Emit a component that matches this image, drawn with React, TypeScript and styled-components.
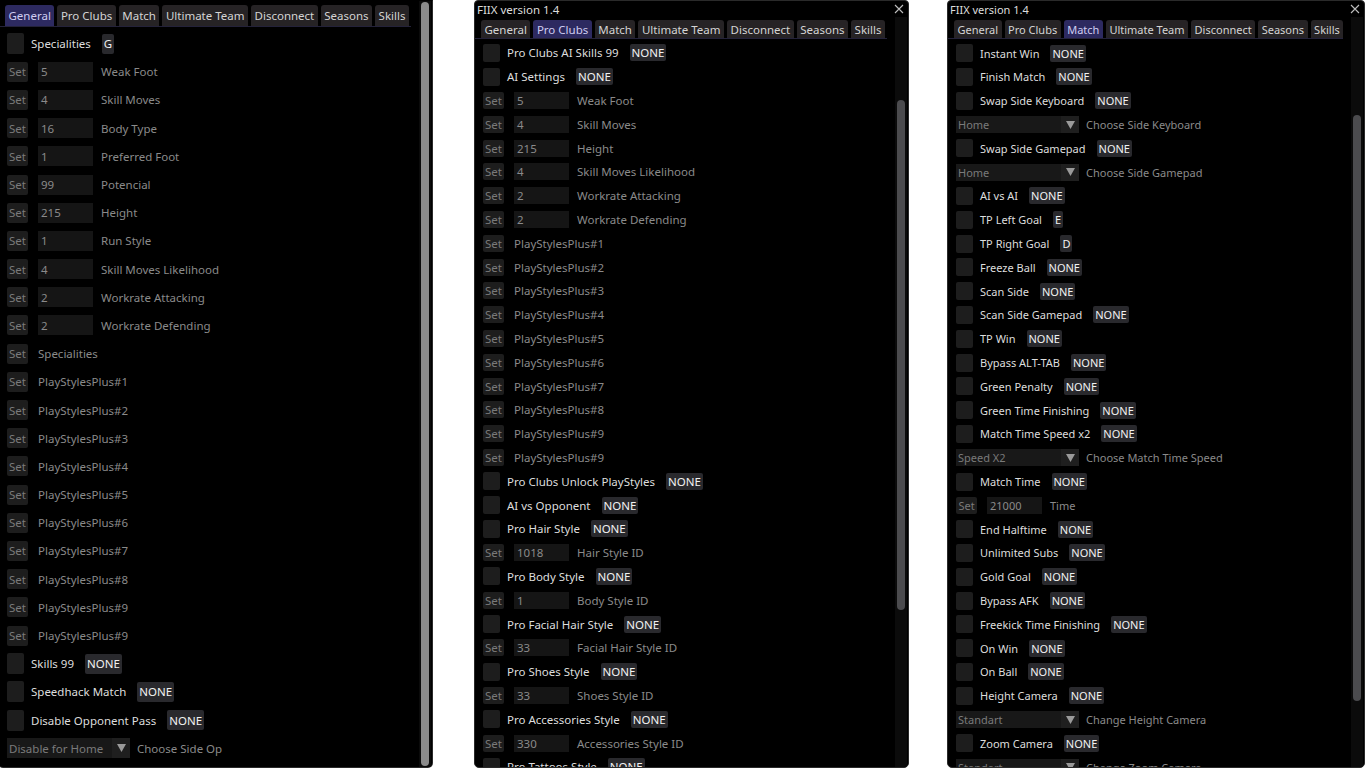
import React from 'react';
import styled, { createGlobalStyle } from 'styled-components';

const colors = {
    page: '#ffffff',
    windowBg: '#000000',
    border: '#2a2a2a',
    tab: '#262325',
    tabActive: '#2d2a60',
    tabText: '#d4d4d4',
    tabActiveText: '#cfcdf2',
    tabLine: '#24223a',
    frame: '#1d1d1d',
    input: '#151515',
    key: '#29292d',
    textBright: '#dddddd',
    textDim: '#8a8a8a',
    textFaint: '#7a7a7a',
    track: '#0b0b0b',
};

const GlobalStyle = createGlobalStyle`
    html, body {
        margin: 0;
        padding: 0;
        background: ${colors.page};
    }
    body {
        font-family: 'Noto Sans', 'Open Sans', sans-serif;
        -webkit-font-smoothing: antialiased;
    }
`;

type Row =
    | { kind: 'check'; label: string; bind: string }
    | { kind: 'set'; value?: string; label: string }
    | { kind: 'combo'; value: string; label: string };

type Metrics = {
    rowH: number;
    elemH: number;
    tabTop: number;
    tabH: number;
    rowsTop: number;
    fontSize: number;
};

const tabs = ['General', 'Pro Clubs', 'Match', 'Ultimate Team', 'Disconnect', 'Seasons', 'Skills'];

const Page = styled.div`
    display: flex;
    align-items: flex-start;
    width: 1366px;
    height: 768px;
    overflow: hidden;
`;

const Window = styled.div<{ $left: number; $width: number; $titled: boolean; $font: number }>`
    flex: none;
    margin-left: ${p => p.$left}px;
    width: ${p => p.$width}px;
    height: 768px;
    box-sizing: border-box;
    background: ${colors.windowBg};
    border: 1px solid ${colors.border};
    border-top-color: ${p => (p.$titled ? colors.border : 'transparent')};
    border-radius: ${p => (p.$titled ? '4px 4px 5px 5px' : '0 0 5px 5px')};
    overflow: hidden;
    display: flex;
    flex-direction: column;
    font-size: ${p => p.$font}px;
    color: ${colors.textBright};
`;

const TitleBar = styled.div`
    flex: none;
    height: 16px;
    display: flex;
    align-items: center;
    justify-content: space-between;
    padding: 0 4px 0 2px;
    color: ${colors.textBright};
    white-space: nowrap;
`;

const Body = styled.div`
    flex: 1;
    min-height: 0;
    display: flex;
`;

const Content = styled.div`
    flex: 1;
    min-width: 0;
    overflow: hidden;
`;

const TabBar = styled.div<{ $top: number; $h: number }>`
    display: flex;
    gap: 3px;
    margin-top: ${p => p.$top}px;
    height: ${p => p.$h}px;
    padding-left: 6px;
    margin-right: 8px;
    border-bottom: 1px solid ${colors.tabLine};
`;

const Tab = styled.div<{ $active: boolean }>`
    display: flex;
    align-items: center;
    padding: 0 3.5px;
    border-radius: 3px 3px 0 0;
    background: ${p => (p.$active ? colors.tabActive : colors.tab)};
    color: ${p => (p.$active ? colors.tabActiveText : colors.tabText)};
    white-space: nowrap;
`;

const Rows = styled.div<{ $top: number }>`
    margin-top: ${p => p.$top}px;
    padding-left: 8px;
`;

const RowLine = styled.div<{ $h: number }>`
    height: ${p => p.$h}px;
    display: flex;
    align-items: center;
    white-space: nowrap;
`;

const CheckBox = styled.div<{ $h: number }>`
    flex: none;
    width: 17px;
    height: ${p => p.$h}px;
    margin-right: 7px;
    border-radius: 2px;
    background: ${colors.frame};
`;

const Label = styled.span<{ $dim?: boolean }>`
    color: ${p => (p.$dim ? colors.textDim : colors.textBright)};
`;

const KeyButton = styled.div<{ $h: number }>`
    display: flex;
    align-items: center;
    height: ${p => p.$h}px;
    margin-left: 11px;
    padding: 0 2px;
    border-radius: 2px;
    background: ${colors.key};
    color: #f2f2f2;
`;

const SetButton = styled.div<{ $h: number }>`
    flex: none;
    display: flex;
    align-items: center;
    justify-content: center;
    width: 21px;
    height: ${p => p.$h}px;
    margin-right: 10px;
    border-radius: 2px;
    background: ${colors.frame};
    color: ${colors.textFaint};
`;

const InputBox = styled.div<{ $h: number }>`
    flex: none;
    display: flex;
    align-items: center;
    box-sizing: border-box;
    width: 55px;
    height: ${p => p.$h}px;
    padding-left: 3px;
    margin-right: 8px;
    background: ${colors.input};
    color: ${colors.textDim};
`;

const Combo = styled.div<{ $h: number }>`
    flex: none;
    display: flex;
    width: 123px;
    height: ${p => p.$h}px;
    margin-right: 7px;
`;

const ComboValue = styled.div`
    flex: 1;
    display: flex;
    align-items: center;
    padding-left: 2px;
    background: #181818;
    color: ${colors.textFaint};
`;

const ComboArrow = styled.div`
    flex: none;
    width: 18px;
    display: flex;
    align-items: center;
    justify-content: center;
    background: #1f1f1f;
`;

const ScrollTrack = styled.div`
    flex: none;
    width: 12px;
    margin-right: 1px;
    background: ${colors.track};
`;

const ScrollThumb = styled.div<{ $color: string }>`
    margin: 0 2px;
    border-radius: 4px;
    background: ${p => p.$color};
`;

const CloseIcon = () => (
    <svg width="10" height="10" viewBox="0 0 10 10">
        <path d="M1 1 L9 9 M9 1 L1 9" stroke="#bdbdbd" strokeWidth="1.1" fill="none" />
    </svg>
);

const ArrowDown = () => (
    <svg width="9" height="8" viewBox="0 0 9 8">
        <path d="M0 0 L9 0 L4.5 8 Z" fill="#9a9a9a" />
    </svg>
);

const RowView = ({ row, m }: { row: Row; m: Metrics }) => {
    if (row.kind === 'check') {
        return (
            <RowLine $h={m.rowH}>
                <CheckBox $h={m.elemH + 1} />
                <Label>{row.label}</Label>
                <KeyButton $h={m.elemH}>{row.bind}</KeyButton>
            </RowLine>
        );
    }
    if (row.kind === 'set') {
        return (
            <RowLine $h={m.rowH}>
                <SetButton $h={m.elemH}>Set</SetButton>
                {row.value !== undefined && <InputBox $h={m.elemH}>{row.value}</InputBox>}
                <Label $dim>{row.label}</Label>
            </RowLine>
        );
    }
    return (
        <RowLine $h={m.rowH}>
            <Combo $h={m.elemH}>
                <ComboValue>{row.value}</ComboValue>
                <ComboArrow>
                    <ArrowDown />
                </ComboArrow>
            </Combo>
            <Label $dim>{row.label}</Label>
        </RowLine>
    );
};

type WindowProps = {
    left: number;
    width: number;
    title?: string;
    active: number;
    metrics: Metrics;
    rows: Row[];
    thumb: { top: number; height: number; color: string };
};

const MenuWindow = ({ left, width, title, active, metrics, rows, thumb }: WindowProps) => (
    <Window $left={left} $width={width} $titled={!!title} $font={metrics.fontSize}>
        {title && (
            <TitleBar>
                <span>{title}</span>
                <CloseIcon />
            </TitleBar>
        )}
        <Body>
            <Content>
                <TabBar $top={metrics.tabTop} $h={metrics.tabH}>
                    {tabs.map((t, i) => (
                        <Tab key={t} $active={i === active}>
                            {t}
                        </Tab>
                    ))}
                </TabBar>
                <Rows $top={metrics.rowsTop}>
                    {rows.map((r, i) => (
                        <RowView key={i} row={r} m={metrics} />
                    ))}
                </Rows>
            </Content>
            <ScrollTrack>
                <ScrollThumb $color={thumb.color} style={{ marginTop: thumb.top, height: thumb.height }} />
            </ScrollTrack>
        </Body>
    </Window>
);

const check = (label: string, bind = 'NONE'): Row => ({ kind: 'check', label, bind });
const set = (label: string, value?: string): Row => ({ kind: 'set', label, value });
const combo = (value: string, label: string): Row => ({ kind: 'combo', value, label });

const plays = (n: number[]) => n.map(i => set(`PlayStylesPlus#${i}`));

const generalRows: Row[] = [
    check('Specialities', 'G'),
    set('Weak Foot', '5'),
    set('Skill Moves', '4'),
    set('Body Type', '16'),
    set('Preferred Foot', '1'),
    set('Potencial', '99'),
    set('Height', '215'),
    set('Run Style', '1'),
    set('Skill Moves Likelihood', '4'),
    set('Workrate Attacking', '2'),
    set('Workrate Defending', '2'),
    set('Specialities'),
    ...plays([1, 2, 3, 4, 5, 6, 7, 8, 9, 9]),
    check('Skills 99'),
    check('Speedhack Match'),
    check('Disable Opponent Pass'),
    combo('Disable for Home', 'Choose Side Op'),
];

const proClubsRows: Row[] = [
    check('Pro Clubs AI Skills 99'),
    check('AI Settings'),
    set('Weak Foot', '5'),
    set('Skill Moves', '4'),
    set('Height', '215'),
    set('Skill Moves Likelihood', '4'),
    set('Workrate Attacking', '2'),
    set('Workrate Defending', '2'),
    ...plays([1, 2, 3, 4, 5, 6, 7, 8, 9, 9]),
    check('Pro Clubs Unlock PlayStyles'),
    check('AI vs Opponent'),
    check('Pro Hair Style'),
    set('Hair Style ID', '1018'),
    check('Pro Body Style'),
    set('Body Style ID', '1'),
    check('Pro Facial Hair Style'),
    set('Facial Hair Style ID', '33'),
    check('Pro Shoes Style'),
    set('Shoes Style ID', '33'),
    check('Pro Accessories Style'),
    set('Accessories Style ID', '330'),
    check('Pro Tattoos Style'),
];

const matchRows: Row[] = [
    check('Instant Win'),
    check('Finish Match'),
    check('Swap Side Keyboard'),
    combo('Home', 'Choose Side Keyboard'),
    check('Swap Side Gamepad'),
    combo('Home', 'Choose Side Gamepad'),
    check('AI vs AI'),
    check('TP Left Goal', 'E'),
    check('TP Right Goal', 'D'),
    check('Freeze Ball'),
    check('Scan Side'),
    check('Scan Side Gamepad'),
    check('TP Win'),
    check('Bypass ALT-TAB'),
    check('Green Penalty'),
    check('Green Time Finishing'),
    check('Match Time Speed x2'),
    combo('Speed X2', 'Choose Match Time Speed'),
    check('Match Time'),
    set('Time', '21000'),
    check('End Halftime'),
    check('Unlimited Subs'),
    check('Gold Goal'),
    check('Bypass AFK'),
    check('Freekick Time Finishing'),
    check('On Win'),
    check('On Ball'),
    check('Height Camera'),
    combo('Standart', 'Change Height Camera'),
    check('Zoom Camera'),
    combo('Standart', 'Change Zoom Camera'),
];

const tallMetrics: Metrics = { rowH: 28.2, elemH: 20, tabTop: 4, tabH: 21, rowsTop: 2.5, fontSize: 11.5 };
const compactMetrics: Metrics = { rowH: 23.8, elemH: 17, tabTop: 3, tabH: 18, rowsTop: 2, fontSize: 11.5 };

const App = () => (
    <>
        <GlobalStyle />
        <Page>
            <MenuWindow
                left={-2}
                width={435}
                active={0}
                metrics={tallMetrics}
                rows={generalRows}
                thumb={{ top: 1, height: 764, color: '#8b8b8b' }}
            />
            <MenuWindow
                left={41}
                width={435}
                title="FIIX version 1.4"
                active={1}
                metrics={compactMetrics}
                rows={proClubsRows}
                thumb={{ top: 83, height: 510, color: '#4b4b4e' }}
            />
            <MenuWindow
                left={38}
                width={418}
                title="FIIX version 1.4"
                active={2}
                metrics={{ ...compactMetrics, rowsTop: 2.3, fontSize: 11 }}
                rows={matchRows}
                thumb={{ top: 98, height: 586, color: '#4b4b4e' }}
            />
        </Page>
    </>
);

export default App;
